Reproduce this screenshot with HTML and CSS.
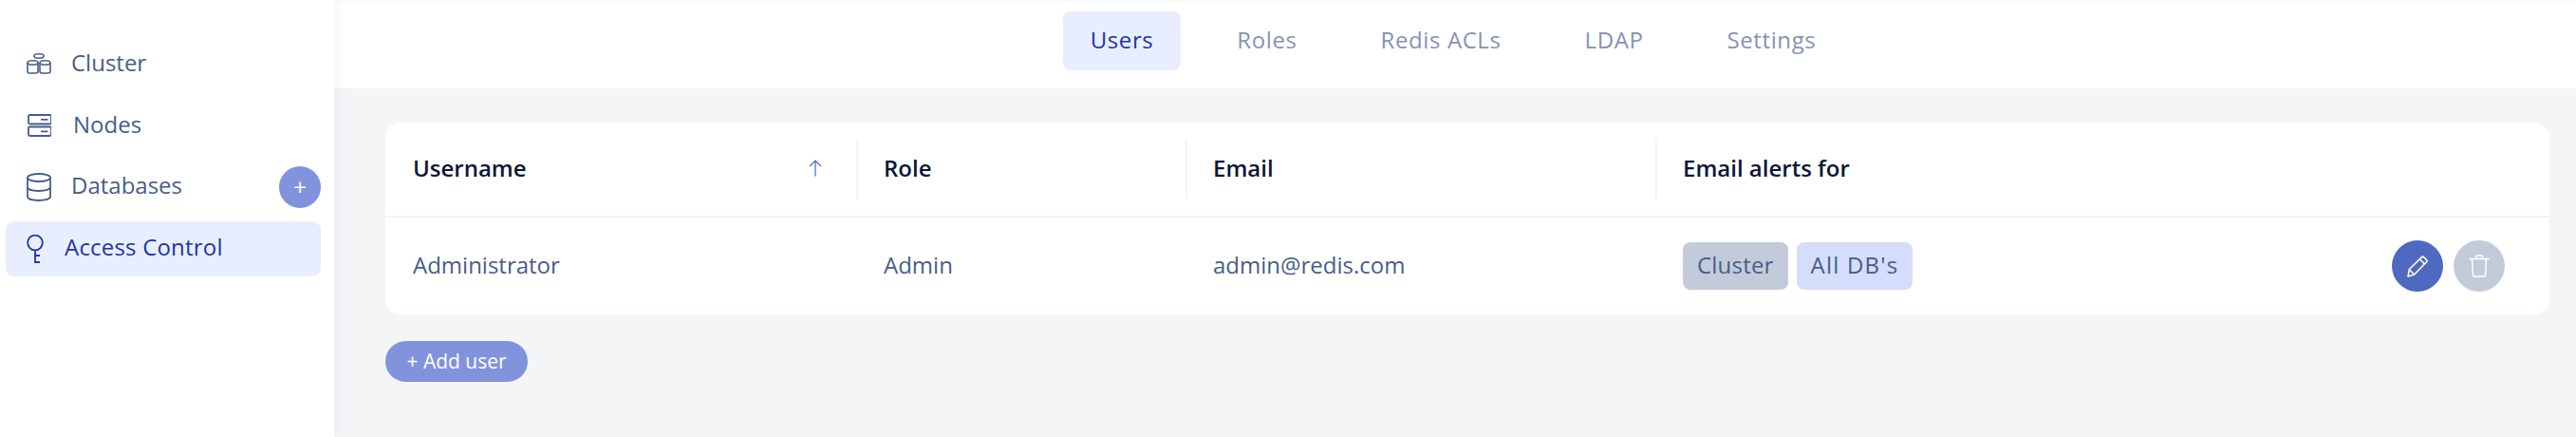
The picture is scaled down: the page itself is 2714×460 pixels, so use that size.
FILE: index.html
```html
<!DOCTYPE html>
<html lang="en">
<head>
    <meta charset="UTF-8">
    <meta name="viewport" content="width=device-width, initial-scale=1.0">
    <title>Access Control</title>
    <link rel="stylesheet" href="styles.css">
</head>
<body>
    <div class="layout">
        <nav class="sidebar">
            <a class="nav-item">
                <svg class="nav-icon" width="26" height="22" viewBox="0 0 26 22" fill="none" stroke="currentColor" stroke-width="1.600">
                    <ellipse cx="13" cy="3" rx="5.200" ry="2.200"/>
                    <ellipse cx="6.500" cy="10" rx="5.500" ry="2.200"/>
                    <path d="M1 10v9c0 1.300 1 2 2 2h7c1 0 2-.7 2-2v-9"/>
                    <ellipse cx="19.500" cy="10" rx="5.500" ry="2.200"/>
                    <path d="M14 10v9c0 1.300 1 2 2 2h7c1 0 2-.7 2-2v-9"/>
                </svg>
                <span class="nav-label nav-label-cluster">Cluster</span>
            </a>
            <a class="nav-item">
                <svg class="nav-icon" width="26" height="24" viewBox="0 0 26 24" fill="none" stroke="currentColor" stroke-width="1.800">
                    <rect x="2" y="1" width="24" height="9.500" rx="1.500"/>
                    <rect x="2" y="13.500" width="24" height="9.500" rx="1.500"/>
                    <path d="M15 5.800h7.500M15 18.300h7.500"/>
                </svg>
                <span class="nav-label nav-label-nodes">Nodes</span>
            </a>
            <a class="nav-item">
                <svg class="nav-icon" width="26" height="30" viewBox="0 0 26 30" fill="none" stroke="currentColor" stroke-width="1.800">
                    <ellipse cx="13" cy="5" rx="12" ry="4"/>
                    <path d="M1 5v20c0 2.400 5.400 4 12 4s12-1.600 12-4V5"/>
                    <path d="M1 15c0 2.400 5.400 4 12 4s12-1.600 12-4"/>
                </svg>
                <span class="nav-label">Databases</span>
                <button class="nav-add">+</button>
            </a>
            <a class="nav-item active">
                <svg class="nav-icon" width="26" height="30" viewBox="0 0 26 30" fill="none" stroke="currentColor" stroke-width="1.800">
                    <circle cx="9" cy="8.500" r="7.800"/>
                    <path d="M9 16.500V29h5M9 22h5"/>
                </svg>
                <span class="nav-label nav-label-access">Access Control</span>
            </a>
        </nav>
        <main class="content">
            <div class="tabs">
                <a class="tab active">Users</a>
                <a class="tab">Roles</a>
                <a class="tab">Redis ACLs</a>
                <a class="tab">LDAP</a>
                <a class="tab">Settings</a>
            </div>
            <div class="page">
                <div class="card">
                    <div class="row head">
                        <div class="cell col-user">
                            <span>Username</span>
                            <svg class="sort" width="14" height="18" viewBox="0 0 14 18" fill="none" stroke="currentColor" stroke-width="1.200">
                                <path d="M7 17.500V1M1 7l6-6 6 6"/>
                            </svg>
                        </div>
                        <div class="cell col-role">Role</div>
                        <div class="cell col-email">Email</div>
                        <div class="cell col-alerts">Email alerts for</div>
                    </div>
                    <div class="row body">
                        <div class="cell col-user">Administrator</div>
                        <div class="cell col-role">Admin</div>
                        <div class="cell col-email">admin@redis.com</div>
                        <div class="cell col-alerts">
                            <span class="tag tag-gray">Cluster</span>
                            <span class="tag tag-blue">All DB's</span>
                        </div>
                        <div class="actions">
                            <button class="round edit">
                                <svg width="24" height="24" viewBox="0 0 24 24" fill="none" stroke="currentColor" stroke-width="1.500" stroke-linejoin="round">
                                    <path d="M2 23l1.300-7.500L16.500 2.600a1.500 1.500 0 0 1 2.100 0l3 3a1.500 1.500 0 0 1 0 2.100L8.600 21z"/>
                                    <path d="M3.300 15.500l5.300 5.500M14.300 4.800l5.200 5.100"/>
                                </svg>
                            </button>
                            <button class="round trash">
                                <svg width="22" height="24" viewBox="0 0 22 24" fill="none" stroke="currentColor" stroke-width="1.500" stroke-linejoin="round">
                                    <path d="M.5 4.500h21M7.500 4.500V2a1 1 0 0 1 1-1h5a1 1 0 0 1 1 1v2.500"/>
                                    <path d="M3.500 4.500l1 17a1.500 1.500 0 0 0 1.500 1.500h10a1.500 1.500 0 0 0 1.500-1.500l1-17"/>
                                </svg>
                            </button>
                        </div>
                    </div>
                </div>
                <button class="add-user">+ Add user</button>
            </div>
        </main>
    </div>
</body>
</html>
```

FILE: styles.css
```css
* {
    box-sizing: border-box;
}
body {
    margin: 0;
    font-family: "Open Sans", "Noto Sans", sans-serif;
    font-size: 24px;
    color: #465e8a;
    background: #f4f5f7;
}
.layout {
    display: flex;
    height: 460px;
    overflow: hidden;
}
.sidebar {
    width: 352px;
    flex-shrink: 0;
    background: #fff;
    padding: 38px 14px 0 6px;
    box-shadow: 0 0 16px rgba(30, 40, 70, 0.06);
    z-index: 1;
}
.nav-item {
    display: flex;
    align-items: center;
    height: 58px;
    margin-bottom: 7px;
    padding-left: 22px;
    border-radius: 9px;
}
.nav-icon {
    flex-shrink: 0;
}
.nav-label {
    margin-left: 21px;
    padding-bottom: 6px;
}
.nav-label-cluster {
    padding-bottom: 4px;
}
.nav-label-nodes {
    margin-left: 23px;
    padding-bottom: 4px;
}
.nav-label-access {
    margin-left: 14px;
    letter-spacing: 0.2px;
}
.nav-item.active {
    background: #e8eefd;
    color: #1f35a5;
}
.nav-add {
    margin-left: auto;
    width: 44px;
    height: 44px;
    border: 0;
    border-radius: 50%;
    background: #8093dc;
    color: #fff;
    font: inherit;
    line-height: 40px;
    padding: 0;
}
.content {
    flex: 1;
    min-width: 0;
}
.tabs {
    display: flex;
    justify-content: center;
    gap: 30px;
    height: 93px;
    padding: 12px 4px 19px 0;
    background: #fff;
    box-shadow: inset 0 3px 3px -2px rgba(30, 40, 70, 0.03);
}
.tab {
    display: flex;
    align-items: center;
    padding: 0 29px 4px;
    border-radius: 8px;
    color: #8494b2;
    letter-spacing: 0.6px;
}
.tab.active {
    background: #e8eefd;
    color: #1f35a5;
}
.page {
    padding: 36px 28px 0 54px;
}
.card {
    background: #fff;
    border-radius: 16px;
}
.row {
    display: flex;
    align-items: center;
}
.head {
    height: 100px;
    border-bottom: 2px solid #f3f4f6;
    color: #0a1736;
    font-weight: 600;
}
.body {
    height: 102px;
}
.cell {
    display: flex;
    align-items: center;
    padding: 0 0 3px 27px;
}
.head .cell {
    height: 64px;
    border-right: 2px solid #f3f4f6;
}
.head .col-alerts {
    border-right: 0;
}
.body .col-alerts {
    padding-bottom: 0;
}
.col-user {
    width: 498px;
    justify-content: space-between;
    padding-left: 29px;
    padding-right: 36px;
}
.col-role {
    width: 347px;
}
.col-email {
    width: 495px;
}
.col-alerts {
    gap: 9px;
}
.sort {
    color: #4e69bf;
}
.tag {
    display: flex;
    align-items: center;
    height: 50px;
    padding: 0 15px 3px;
    border-radius: 8px;
}
.tag-gray {
    background: #c3cbd9;
    letter-spacing: 0.2px;
}
.tag-blue {
    background: #d4ddf9;
    letter-spacing: 1.2px;
}
.actions {
    margin-left: auto;
    display: flex;
    gap: 11px;
    padding-right: 47px;
}
.round {
    display: flex;
    align-items: center;
    justify-content: center;
    width: 54px;
    height: 54px;
    border: 0;
    border-radius: 50%;
    color: #fff;
    padding: 0;
}
.edit {
    background: #4e69bf;
}
.trash {
    background: #c3cbd9;
}
.add-user {
    display: block;
    margin-top: 28px;
    width: 150px;
    height: 43px;
    border: 0;
    border-radius: 22px;
    background: #8093dc;
    color: #fff;
    font: inherit;
    font-size: 21px;
    padding: 0 0 2px;
}
```
